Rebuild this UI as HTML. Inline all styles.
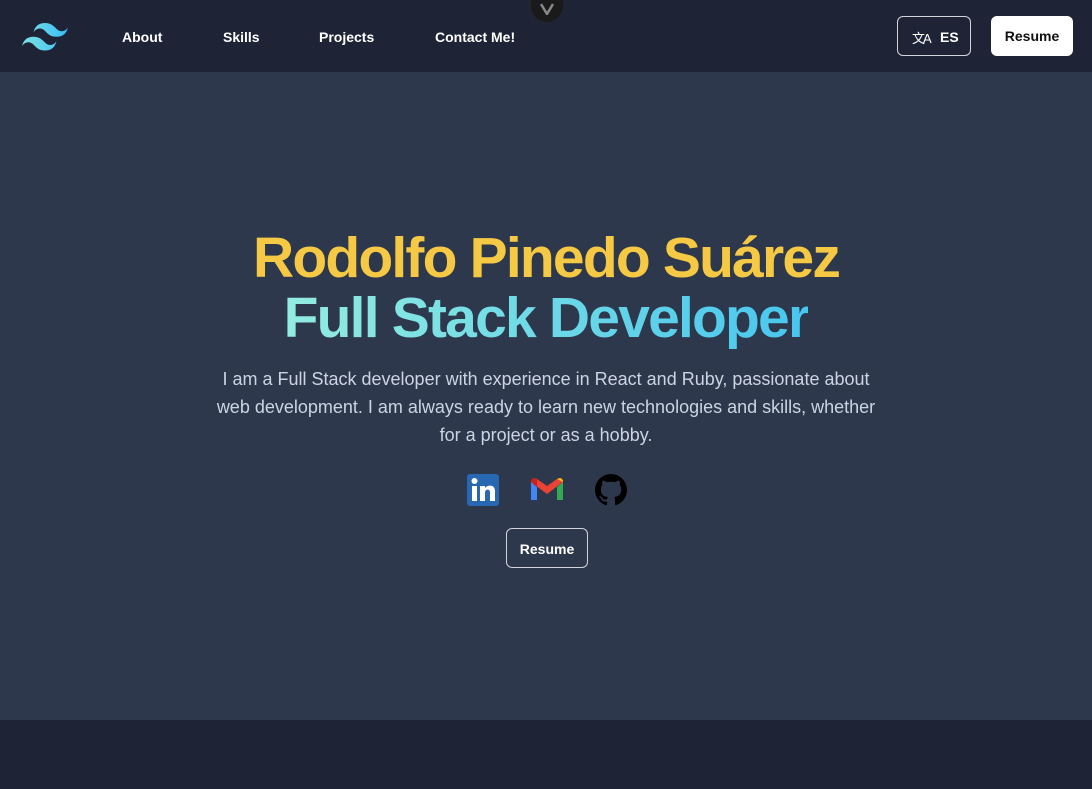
<!DOCTYPE html>
<html><head><meta charset="utf-8"><style>
*{margin:0;padding:0;box-sizing:border-box}
body{width:1092px;height:789px;background:#2e384d;font-family:"Liberation Sans",sans-serif;position:relative;overflow:hidden}
nav{position:absolute;top:0;left:0;width:1092px;height:72px;background:#1f2336}
.links a{position:absolute;top:29px;color:#fff;font-weight:bold;font-size:14px;text-decoration:none}
.es{position:absolute;left:897px;top:16px;width:74px;height:40px;border:1px solid #d1d5db;border-radius:6px;color:#fff;font-weight:bold;font-size:14px}
.res{position:absolute;left:991px;top:16px;width:82px;height:40px;background:#fff;border-radius:6px;color:#111;font-weight:bold;font-size:14px;text-align:center;line-height:41px}
.tab{position:absolute;left:531px;top:-8px;width:32px;height:30px;background:#1a1a1a;border-radius:0 0 16px 16px}
footer{position:absolute;top:720px;left:0;width:1092px;height:69px;background:#1f2336}
h1{position:absolute;top:228px;left:0;width:1092px;text-align:center;font-size:57px;line-height:60px;letter-spacing:-1.8px;font-weight:bold}
.y{color:#f6c944}
.g{background:linear-gradient(90deg,#93ece0,#47c6ee);-webkit-background-clip:text;color:transparent}
p{position:absolute;top:365px;left:206px;width:680px;text-align:center;color:#cbd5e1;font-size:18px;line-height:28px}
.b2{position:absolute;left:506px;top:528px;width:82px;height:40px;border:1px solid #d1d5db;border-radius:6px;color:#fff;font-weight:bold;font-size:14px;text-align:center;line-height:40px}
</style></head><body>
<nav>
<svg style="position:absolute;left:22px;top:23px" width="46" height="28" viewBox="0 0 54 33"><defs><linearGradient id="t" x1="0" x2="1"><stop offset="0" stop-color="#7ee3e0"/><stop offset="1" stop-color="#38bdf8"/></linearGradient></defs><path fill="url(#t)" d="M27 0c-7.2 0-11.7 3.6-13.5 10.8 2.7-3.6 5.850-4.950 9.450-4.050 2.05.51 3.52 2 5.14 3.65C30.74 13.08 33.79 16.2 40.5 16.2c7.2 0 11.7-3.6 13.5-10.8-2.7 3.6-5.85 4.95-9.45 4.05-2.05-.51-3.52-2-5.14-3.65C36.76 3.12 33.71 0 27 0zM13.5 16.2C6.3 16.2 1.8 19.8 0 27c2.7-3.6 5.85-4.95 9.45-4.05 2.05.51 3.52 2 5.14 3.65C17.24 29.28 20.29 32.4 27 32.4c7.2 0 11.7-3.6 13.5-10.8-2.7 3.6-5.85 4.95-9.45 4.050-2.05-.51-3.52-2-5.14-3.65C23.26 19.32 20.21 16.2 13.5 16.2z"/></svg>
<div class="links"><a style="left:122px">About</a><a style="left:223px">Skills</a><a style="left:319px">Projects</a><a style="left:435px">Contact Me!</a></div>
<div class="tab"><svg style="position:absolute;left:9px;top:11px" width="14" height="12" viewBox="0 0 14 12"><path d="M1 1l6 10 6-10" stroke="#888" stroke-width="2.5" fill="none"/></svg></div>
<div class="es"><span style="position:absolute;left:14px;top:11px;font-weight:normal;font-size:13px;letter-spacing:-2px">文A</span><span style="position:absolute;left:42px;top:12px">ES</span></div>
<div class="res">Resume</div>
</nav>
<h1><span class="y">Rodolfo Pinedo Suárez</span><br><span class="g">Full Stack Developer</span></h1>
<p>I am a Full Stack developer with experience in React and Ruby, passionate about web development. I am always ready to learn new technologies and skills, whether for a project or as a hobby.</p>
<svg style="position:absolute;left:467px;top:474px" width="32" height="32" viewBox="0 0 32 32"><rect width="32" height="32" rx="3" fill="#2867b2"/><rect x="5" y="12" width="5" height="15" fill="#fff"/><circle cx="7.5" cy="7" r="3" fill="#fff"/><path d="M13 12h5v2.2c1-1.6 2.7-2.6 5-2.6 3.6 0 5 2.3 5 6V27h-5v-8.4c0-2-.7-3-2.3-3s-2.7 1.1-2.7 3V27h-5z" fill="#fff"/></svg>
<svg style="position:absolute;left:531px;top:478px" width="32" height="24" viewBox="0 0 32 24"><path d="M0 4v18h6V9z" fill="#4285f4"/><path d="M26 9v13h6V4z" fill="#34a853"/><path d="M0 4l16 12L32 4c0-3-3-5-6-3L16 8 6 1C3-1 0 1 0 4z" fill="#ea4335"/><path d="M26 1l6 3c0-2-1-4-3-4z" fill="#fbbc04"/><path d="M0 4c0-2 1-4 3-4l3 1v8z" fill="#c5221f"/></svg>
<svg style="position:absolute;left:595px;top:474px" width="32" height="32" viewBox="0 0 16 16"><path fill="#000" d="M8 0C3.58 0 0 3.58 0 8c0 3.54 2.29 6.53 5.47 7.59.4.07.55-.17.55-.38 0-.19-.01-.82-.01-1.490-2.01.37-2.53-.49-2.69-.94-.09-.23-.48-.94-.82-1.130-.28-.15-.68-.52-.01-.53.63-.01 1.08.58 1.23.82.72 1.21 1.87.87 2.33.66.07-.52.28-.87.51-1.07-1.78-.2-3.640-.89-3.640-3.950 0-.87.31-1.59.82-2.15-.08-.2-.36-1.02.08-2.12 0 0 .67-.21 2.2.82.64-.18 1.32-.27 2-.27.68 0 1.36.09 2 .27 1.53-1.04 2.2-.82 2.2-.82.44 1.1.16 1.92.08 2.12.51.56.82 1.27.82 2.15 0 3.07-1.87 3.75-3.65 3.95.29.25.54.73.54 1.48 0 1.07-.01 1.93-.01 2.2 0 .21.15.46.55.38A8.013 8.013 0 0016 8c0-4.42-3.58-8-8-8z"/></svg>
<div class="b2">Resume</div>
<footer></footer>
</body></html>
